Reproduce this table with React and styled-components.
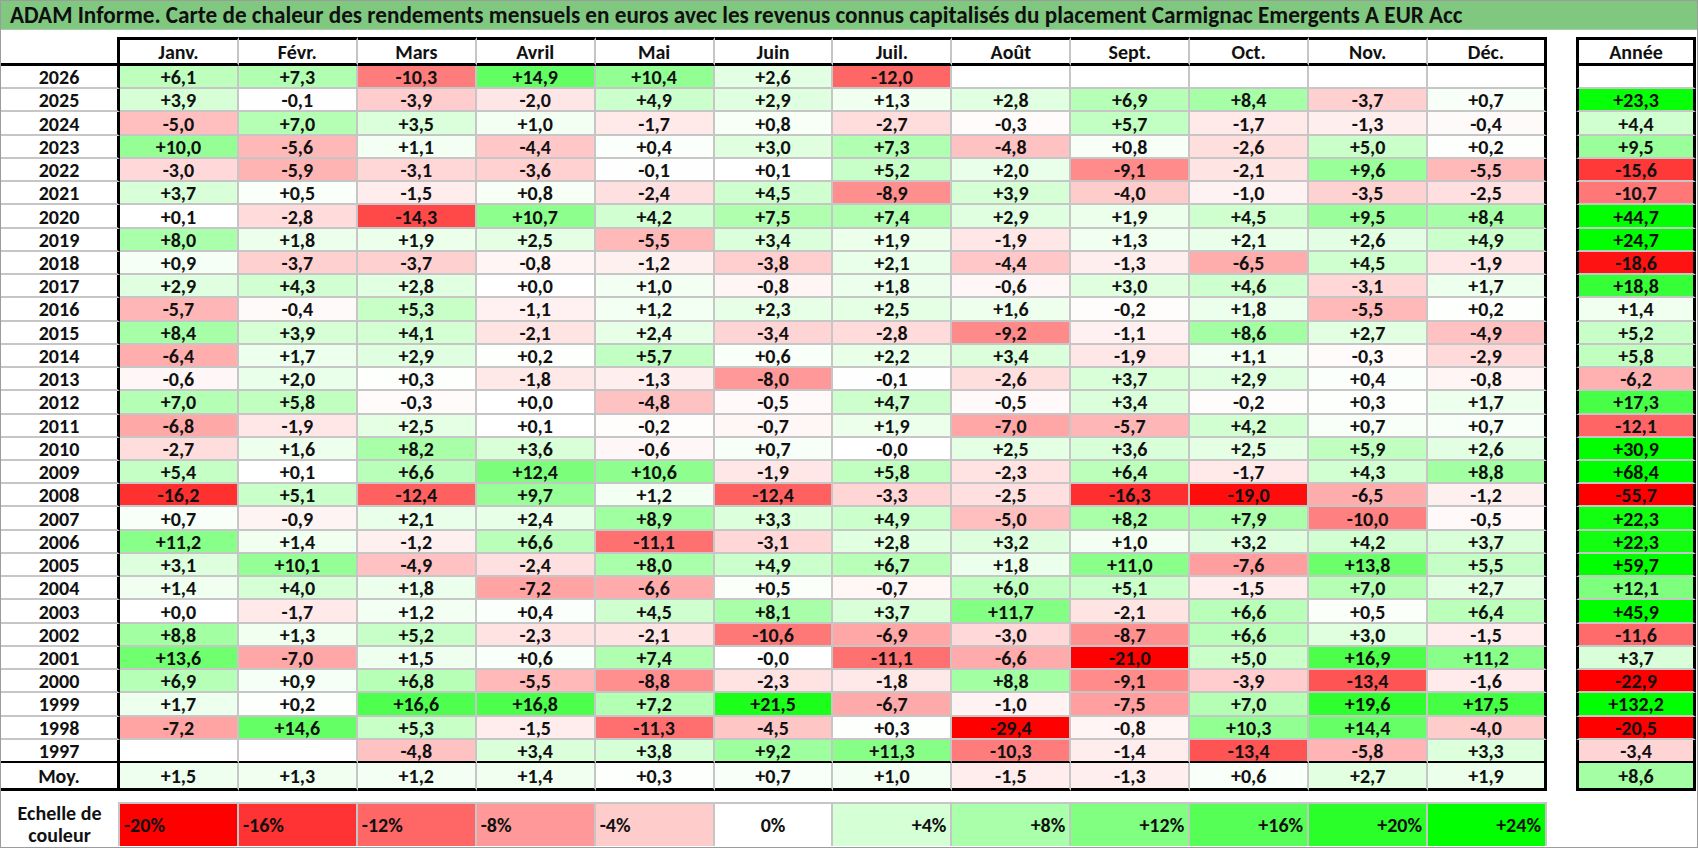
import React from 'react'
import styled, { createGlobalStyle } from 'styled-components'

const GlobalStyle = createGlobalStyle`
  html, body {
    margin: 0;
    padding: 0;
    background: #ffffff;
  }
  body {
    font-family: Carlito, Calibri, Lato, "Liberation Sans", sans-serif;
    color: #111;
  }
`

const MONTHS = ['Janv.', 'Févr.', 'Mars', 'Avril', 'Mai', 'Juin', 'Juil.', 'Août', 'Sept.', 'Oct.', 'Nov.', 'Déc.']

// year, 12 monthly values, yearly value
const ROWS = [
  ['2026', '+6,1 +7,3 -10,3 +14,9 +10,4 +2,6 -12,0 _ _ _ _ _', '_'],
  ['2025', '+3,9 -0,1 -3,9 -2,0 +4,9 +2,9 +1,3 +2,8 +6,9 +8,4 -3,7 +0,7', '+23,3'],
  ['2024', '-5,0 +7,0 +3,5 +1,0 -1,7 +0,8 -2,7 -0,3 +5,7 -1,7 -1,3 -0,4', '+4,4'],
  ['2023', '+10,0 -5,6 +1,1 -4,4 +0,4 +3,0 +7,3 -4,8 +0,8 -2,6 +5,0 +0,2', '+9,5'],
  ['2022', '-3,0 -5,9 -3,1 -3,6 -0,1 +0,1 +5,2 +2,0 -9,1 -2,1 +9,6 -5,5', '-15,6'],
  ['2021', '+3,7 +0,5 -1,5 +0,8 -2,4 +4,5 -8,9 +3,9 -4,0 -1,0 -3,5 -2,5', '-10,7'],
  ['2020', '+0,1 -2,8 -14,3 +10,7 +4,2 +7,5 +7,4 +2,9 +1,9 +4,5 +9,5 +8,4', '+44,7'],
  ['2019', '+8,0 +1,8 +1,9 +2,5 -5,5 +3,4 +1,9 -1,9 +1,3 +2,1 +2,6 +4,9', '+24,7'],
  ['2018', '+0,9 -3,7 -3,7 -0,8 -1,2 -3,8 +2,1 -4,4 -1,3 -6,5 +4,5 -1,9', '-18,6'],
  ['2017', '+2,9 +4,3 +2,8 +0,0 +1,0 -0,8 +1,8 -0,6 +3,0 +4,6 -3,1 +1,7', '+18,8'],
  ['2016', '-5,7 -0,4 +5,3 -1,1 +1,2 +2,3 +2,5 +1,6 -0,2 +1,8 -5,5 +0,2', '+1,4'],
  ['2015', '+8,4 +3,9 +4,1 -2,1 +2,4 -3,4 -2,8 -9,2 -1,1 +8,6 +2,7 -4,9', '+5,2'],
  ['2014', '-6,4 +1,7 +2,9 +0,2 +5,7 +0,6 +2,2 +3,4 -1,9 +1,1 -0,3 -2,9', '+5,8'],
  ['2013', '-0,6 +2,0 +0,3 -1,8 -1,3 -8,0 -0,1 -2,6 +3,7 +2,9 +0,4 -0,8', '-6,2'],
  ['2012', '+7,0 +5,8 -0,3 +0,0 -4,8 -0,5 +4,7 -0,5 +3,4 -0,2 +0,3 +1,7', '+17,3'],
  ['2011', '-6,8 -1,9 +2,5 +0,1 -0,2 -0,7 +1,9 -7,0 -5,7 +4,2 +0,7 +0,7', '-12,1'],
  ['2010', '-2,7 +1,6 +8,2 +3,6 -0,6 +0,7 -0,0 +2,5 +3,6 +2,5 +5,9 +2,6', '+30,9'],
  ['2009', '+5,4 +0,1 +6,6 +12,4 +10,6 -1,9 +5,8 -2,3 +6,4 -1,7 +4,3 +8,8', '+68,4'],
  ['2008', '-16,2 +5,1 -12,4 +9,7 +1,2 -12,4 -3,3 -2,5 -16,3 -19,0 -6,5 -1,2', '-55,7'],
  ['2007', '+0,7 -0,9 +2,1 +2,4 +8,9 +3,3 +4,9 -5,0 +8,2 +7,9 -10,0 -0,5', '+22,3'],
  ['2006', '+11,2 +1,4 -1,2 +6,6 -11,1 -3,1 +2,8 +3,2 +1,0 +3,2 +4,2 +3,7', '+22,3'],
  ['2005', '+3,1 +10,1 -4,9 -2,4 +8,0 +4,9 +6,7 +1,8 +11,0 -7,6 +13,8 +5,5', '+59,7'],
  ['2004', '+1,4 +4,0 +1,8 -7,2 -6,6 +0,5 -0,7 +6,0 +5,1 -1,5 +7,0 +2,7', '+12,1'],
  ['2003', '+0,0 -1,7 +1,2 +0,4 +4,5 +8,1 +3,7 +11,7 -2,1 +6,6 +0,5 +6,4', '+45,9'],
  ['2002', '+8,8 +1,3 +5,2 -2,3 -2,1 -10,6 -6,9 -3,0 -8,7 +6,6 +3,0 -1,5', '-11,6'],
  ['2001', '+13,6 -7,0 +1,5 +0,6 +7,4 -0,0 -11,1 -6,6 -21,0 +5,0 +16,9 +11,2', '+3,7'],
  ['2000', '+6,9 +0,9 +6,8 -5,5 -8,8 -2,3 -1,8 +8,8 -9,1 -3,9 -13,4 -1,6', '-22,9'],
  ['1999', '+1,7 +0,2 +16,6 +16,8 +7,2 +21,5 -6,7 -1,0 -7,5 +7,0 +19,6 +17,5', '+132,2'],
  ['1998', '-7,2 +14,6 +5,3 -1,5 -11,3 -4,5 +0,3 -29,4 -0,8 +10,3 +14,4 -4,0', '-20,5'],
  ['1997', '_ _ -4,8 +3,4 +3,8 +9,2 +11,3 -10,3 -1,4 -13,4 -5,8 +3,3', '-3,4'],
].map(([year, months, total]) => ({
  year,
  months: months.split(' ').map((v) => (v === '_' ? '' : v)),
  total: total === '_' ? '' : total,
}))

const AVERAGE = '+1,5 +1,3 +1,2 +1,4 +0,3 +0,7 +1,0 -1,5 -1,3 +0,6 +2,7 +1,9'.split(' ')
const AVERAGE_TOTAL = '+8,6'

const SCALE = ['-20', '-16', '-12', '-8', '-4', '0', '+4', '+8', '+12', '+16', '+20', '+24']

// three colour scale: -20 red, 0 white, +24 green
function heat(text) {
  if (!text) return '#ffffff'
  const v = parseFloat(text.replace(',', '.'))
  if (v < 0) {
    const c = Math.round(255 * (1 - Math.min(1, -v / 20)))
    return `rgb(255, ${c}, ${c})`
  }
  const c = Math.round(255 * (1 - Math.min(1, v / 24)))
  return `rgb(${c}, 255, ${c})`
}

const GRID = '#c6c6c6'
const INK = '#000000'

const Sheet = styled.div`
  width: 1698px;
  height: 848px;
  box-sizing: border-box;
  border: 1px solid #9c9c9c;
  overflow: hidden;
  background: #ffffff;
`

const TitleBar = styled.div`
  height: 29px;
  box-sizing: border-box;
  display: flex;
  align-items: center;
  padding-left: 9px;
  background: #80c880;
  border-bottom: 1px solid #a8cfa8;
  font-size: 23.2px;
  font-weight: 700;
  color: #101010;
  white-space: nowrap;
`

const Body = styled.div`
  display: flex;
  gap: 29px;
  padding-top: 7px;
`

const Block = styled.div`
  display: flex;
  flex-direction: column;
  width: ${({ $width }) => $width}px;
`

const Row = styled.div`
  display: grid;
  grid-template-columns: ${({ $cols }) => $cols};
  height: ${({ $height }) => $height}px;
`

const Cell = styled.div`
  box-sizing: border-box;
  display: flex;
  align-items: center;
  justify-content: center;
  font-size: 20px;
  font-weight: 700;
  background: ${({ $bg }) => $bg || '#ffffff'};
  border-bottom: ${({ $bottom }) => $bottom};
  border-right: ${({ $right }) => $right};
  border-left: ${({ $left }) => $left || 'none'};
  border-top: ${({ $top }) => $top || 'none'};
  line-height: 1;
  padding-top: 1px;
`

const LegendRow = styled.div`
  display: grid;
  grid-template-columns: 119px repeat(12, 1fr);
  width: 1546px;
  height: 43px;
  margin-top: 11px;
`

const LegendLabel = styled.div`
  display: flex;
  align-items: center;
  justify-content: center;
  text-align: center;
  font-size: 20px;
  font-weight: 700;
  line-height: 22px;
  border-right: 2px solid ${GRID};
`

const Swatch = styled.div`
  box-sizing: border-box;
  display: flex;
  align-items: center;
  justify-content: ${({ $align }) => $align};
  padding: 0 4px;
  background: ${({ $bg }) => $bg};
  border-top: 2px solid ${GRID};
  border-right: 2px solid ${GRID};
  font-size: 20px;
  font-weight: 700;
`

const MAIN_COLS = '119px repeat(12, 1fr)'
const ROW_H = 23.24
const thick = `3px solid ${INK}`
const thin = `2px solid ${GRID}`

function MonthCells({ values, bottom }) {
  return values.map((v, i) => (
    <Cell key={i} $bg={heat(v)} $bottom={bottom} $right={i === 11 ? thick : thin}>
      {v}
    </Cell>
  ))
}

function MainTable() {
  return (
    <Block $width={1546}>
      <Row $cols={MAIN_COLS} $height={29}>
        <Cell $bottom={thick} $right={thick} />
        {MONTHS.map((m, i) => (
          <Cell key={m} $top={thick} $bottom={thick} $right={i === 11 ? thick : thin}>
            {m}
          </Cell>
        ))}
      </Row>
      {ROWS.map((r, idx) => {
        const bottom = idx === ROWS.length - 1 ? thick : thin
        return (
          <Row key={r.year} $cols={MAIN_COLS} $height={ROW_H}>
            <Cell $bottom={bottom} $right={thick}>{r.year}</Cell>
            <MonthCells values={r.months} bottom={bottom} />
          </Row>
        )
      })}
      <Row $cols={MAIN_COLS} $height={28}>
        <Cell $bottom={thick} $right={thick}>Moy.</Cell>
        <MonthCells values={AVERAGE} bottom={thick} />
      </Row>
      <LegendRow>
        <LegendLabel>
          Echelle de
          <br />
          couleur
        </LegendLabel>
        {SCALE.map((s) => {
          const v = parseFloat(s)
          const align = v < 0 ? 'flex-start' : v > 0 ? 'flex-end' : 'center'
          return (
            <Swatch key={s} $bg={heat(s)} $align={align}>
              {s}%
            </Swatch>
          )
        })}
      </LegendRow>
    </Block>
  )
}

function YearTable() {
  return (
    <Block $width={120}>
      <Row $cols="1fr" $height={29}>
        <Cell $top={thick} $left={thick} $right={thick} $bottom={thick}>Année</Cell>
      </Row>
      {ROWS.map((r, idx) => (
        <Row key={r.year} $cols="1fr" $height={ROW_H}>
          <Cell
            $bg={heat(r.total)}
            $left={thick}
            $right={thick}
            $bottom={idx === ROWS.length - 1 ? thick : thin}
          >
            {r.total}
          </Cell>
        </Row>
      ))}
      <Row $cols="1fr" $height={28}>
        <Cell $bg={heat(AVERAGE_TOTAL)} $left={thick} $right={thick} $bottom={thick}>
          {AVERAGE_TOTAL}
        </Cell>
      </Row>
    </Block>
  )
}

export default function App() {
  return (
    <>
      <GlobalStyle />
      <Sheet>
        <TitleBar>
          ADAM Informe. Carte de chaleur des rendements mensuels en euros avec les revenus connus capitalisés du
          placement Carmignac Emergents A EUR Acc
        </TitleBar>
        <Body>
          <MainTable />
          <YearTable />
        </Body>
      </Sheet>
    </>
  )
}
